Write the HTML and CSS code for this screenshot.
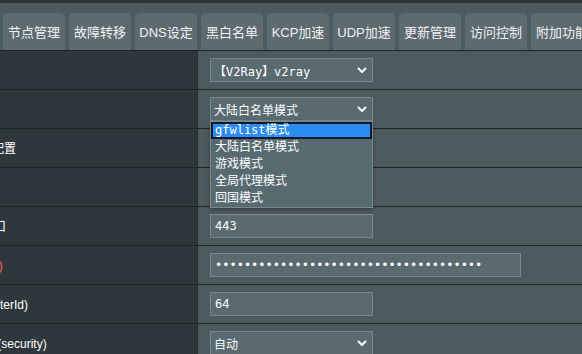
FILE: index.html
```html
<!DOCTYPE html>
<html lang="zh">
<head>
  <meta charset="UTF-8" />
  <title>科学上网 - 节点设置</title>
  <link rel="stylesheet" href="styles.css">
</head>
<body>

  <div class="topbar"></div>

  <!-- Pestañas -->
  <nav class="tabs">
    <a class="tab">节点管理</a>
    <a class="tab">故障转移</a>
    <a class="tab">DNS设定</a>
    <a class="tab">黑白名单</a>
    <a class="tab">KCP加速</a>
    <a class="tab">UDP加速</a>
    <a class="tab">更新管理</a>
    <a class="tab">访问控制</a>
    <a class="tab">附加功能</a>
  </nav>

  <!-- Tabla de ajustes -->
  <div class="settings">
    <div class="row">
      <div class="label">节点选择</div>
      <div class="value">
        <div class="select"><span>【V2Ray】v2ray</span>
          <svg class="chev" width="10" height="6" viewBox="0 0 10 6"><path d="M1 1l4 4 4-4" fill="none" stroke="#fff" stroke-width="2"/></svg>
        </div>
      </div>
    </div>
    <div class="row">
      <div class="label">模式</div>
      <div class="value">
        <div class="select-wrap">
          <div class="select"><span>大陆白名单模式</span>
            <svg class="chev" width="10" height="6" viewBox="0 0 10 6"><path d="M1 1l4 4 4-4" fill="none" stroke="#fff" stroke-width="2"/></svg>
          </div>
          <ul class="dropdown">
            <li class="opt active">gfwlist模式</li>
            <li class="opt">大陆白名单模式</li>
            <li class="opt">游戏模式</li>
            <li class="opt">全局代理模式</li>
            <li class="opt">回国模式</li>
          </ul>
        </div>
      </div>
    </div>
    <div class="row">
      <div class="label">使用json配置</div>
      <div class="value"></div>
    </div>
    <div class="row">
      <div class="label">地址</div>
      <div class="value"></div>
    </div>
    <div class="row">
      <div class="label">服务器端口</div>
      <div class="value"><input class="text" type="text" value="443"></div>
    </div>
    <div class="row">
      <div class="label warn">用户ID (id)</div>
      <div class="value"><input class="text wide" type="password" value="0000000000000000000000000000000000000"></div>
    </div>
    <div class="row">
      <div class="label">额外ID (AlterId)</div>
      <div class="value"><input class="text" type="text" value="64"></div>
    </div>
    <div class="row">
      <div class="label">加密方式 (security)</div>
      <div class="value">
        <div class="select"><span>自动</span>
          <svg class="chev" width="10" height="6" viewBox="0 0 10 6"><path d="M1 1l4 4 4-4" fill="none" stroke="#fff" stroke-width="2"/></svg>
        </div>
      </div>
    </div>
  </div>

</body>
</html>
```

FILE: styles.css
```css
/* Base */
* { box-sizing: border-box; margin: 0; padding: 0; }
body {
  font-family: "Liberation Sans", "Noto Sans CJK SC", sans-serif;
  font-size: 12px;
  color: #fff;
  background: #4d5a5e;
  overflow: hidden;
}

.topbar {
  height: 3px;
  background: #2b3336;
}

/* Pestañas */
.tabs {
  display: flex;
  gap: 4px;
  height: 47px;
  padding: 10px 0 0 3px;
  background: #4d5a5e;
}
.tab {
  flex: none;
  width: 62px;
  height: 37px;
  display: flex;
  align-items: center;
  justify-content: center;
  background: #5d6b70;
  border-radius: 5px 5px 0 0;
  font-size: 13px;
  color: #f2f2f2;
  white-space: nowrap;
}

/* Tabla */
.settings {
  margin-left: -54px;
  width: calc(100% + 54px);
  border-top: 1px solid #1f2629;
}
.row {
  display: grid;
  grid-template-columns: 252px 1fr;
  height: 39px;
  border-bottom: 1px solid #1f2629;
}
.label {
  display: flex;
  align-items: center;
  padding-bottom: 2px;
  background: #2e383c;
  border-right: 1px solid #232b2e;
  white-space: nowrap;
}
.label.warn { color: #ff6666; }
.value {
  display: flex;
  align-items: center;
  padding-left: 12px;
  background: #4d5a5e;
}

/* Controles */
.select,
.text {
  width: 163px;
  height: 24px;
  background: #596a70;
  border: 1px solid #7a888c;
  color: #fff;
  font-family: "DejaVu Sans Mono", "Noto Sans CJK SC", monospace;
  font-size: 12px;
}
.select {
  display: flex;
  align-items: center;
  justify-content: space-between;
  padding: 0 5px 0 3px;
}
.text {
  padding: 0 4px;
  outline: none;
}
.text.wide { width: 311px; }

.select-wrap { position: relative; }
.dropdown {
  position: absolute;
  top: 100%;
  left: 0;
  width: 163px;
  list-style: none;
  background: #566a70;
  border: 1px solid #7a888c;
  box-shadow: 0 2px 4px rgba(0,0,0,0.3);
  font-family: "DejaVu Sans Mono", "Noto Sans CJK SC", monospace;
  z-index: 2;
}
.opt {
  height: 17px;
  line-height: 17px;
  padding-left: 4px;
  white-space: nowrap;
}
.opt.active {
  background: #2b8cf2;
  border: 2px solid #0d1a2e;
  line-height: 13px;
  padding-left: 2px;
}
```
